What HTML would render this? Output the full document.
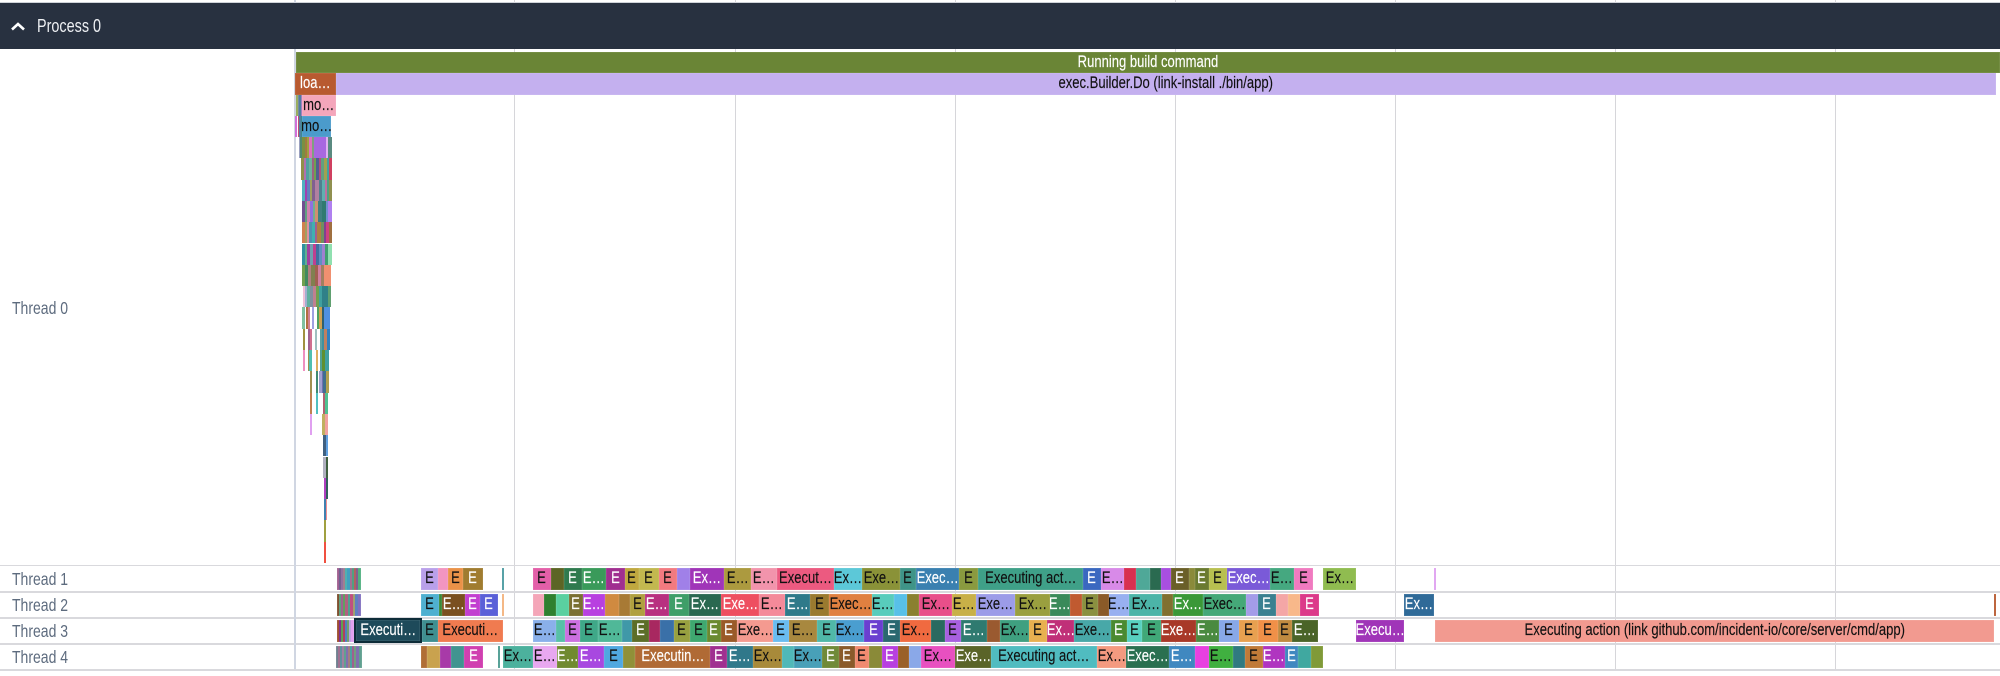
<!DOCTYPE html>
<html><head><meta charset="utf-8"><style>
html,body{margin:0;padding:0;width:2000px;height:676px;overflow:hidden;background:#fff}
body{position:relative;font-family:"Liberation Sans",sans-serif}
#p{position:absolute;left:0;top:0;width:2000px;height:676px;filter:blur(.35px)}
.g{position:absolute;top:0;width:1px;height:669px;background:#d6d6da}
.h{position:absolute;left:0;width:2000px;height:1.5px;background:#d9d9dd}
.l{position:absolute;left:12px;font-size:17.5px;color:#5d6b7e;line-height:22px;transform:scaleX(.8);transform-origin:0 0}
.r{position:absolute;left:0;top:0;width:2000px;height:22px}
.r i{position:absolute;top:0;height:100%;display:flex;justify-content:center;font-style:normal;font-size:16.5px;line-height:21px;color:#111;overflow:hidden;white-space:nowrap;box-shadow:inset 0 0 0 .5px rgba(255,255,255,.15);-webkit-text-stroke:.15px}
.r i.w{color:#fff}
b{font-weight:normal;display:block;flex:none;transform:scaleX(.79)}
.f{position:absolute;height:21.3px}
</style></head><body><div id="p">
<div style="position:absolute;left:0;top:2px;width:2000px;height:1px;background:#cfd3d9"></div>
<div class="g" style="left:514px"></div><div class="g" style="left:735px"></div><div class="g" style="left:955px"></div><div class="g" style="left:1175px"></div><div class="g" style="left:1395px"></div><div class="g" style="left:1615px"></div><div class="g" style="left:1835px"></div>
<div class="h" style="top:564.5px"></div><div class="h" style="top:591px"></div><div class="h" style="top:617px"></div><div class="h" style="top:643px"></div><div class="h" style="top:669px"></div>
<div style="position:absolute;left:294px;top:0;width:2px;height:669px;background:#d0d6e2"></div>
<div style="position:absolute;left:0;top:3px;width:2000px;height:46px;background:#283140"></div>
<svg style="position:absolute;left:0;top:0" width="30" height="50"><path d="M12 29.5 L18 24 L24 29.5" fill="none" stroke="#fff" stroke-width="2.6"/></svg>
<div class="l" style="left:37px;top:15px;font-size:18px;color:#eef0f3">Process 0</div>
<div class="l" style="top:297px">Thread 0</div><div class="l" style="top:568px">Thread 1</div><div class="l" style="top:594px">Thread 2</div><div class="l" style="top:620px">Thread 3</div><div class="l" style="top:646px">Thread 4</div>

<div class="r" style="top:52px;height:21.3px"><i class="w" style="left:296px;width:1704px;background:#6a8536"><b>Running build command</b></i></div>
<div class="r" style="top:73.3px;height:21.3px"><i class="w" style="left:295px;width:41px;background:#b85a30"><b>loa…</b></i><i style="left:336px;width:1660px;background:#c4b0ef"><b>exec.Builder.Do (link-install ./bin/app)</b></i></div>
<div class="r" style="top:94.6px;height:21.3px"><i style="left:302px;width:34px;background:#f4a6bb"><b>mo…</b></i></div>
<div class="r" style="top:115.8px;height:21.3px"><i style="left:302px;width:29px;background:#4b9bcb"><b>mo…</b></i></div>
<div class="f" style="left:296px;top:94.6px;width:6px;background:linear-gradient(90deg,#9aae60 0 2px,#7a8aa0 0 3px,#4f7fa0 0 5px,#a080c0 0 6px)"></div>
<div class="f" style="left:295px;top:115.8px;width:7px;background:linear-gradient(90deg,#d070d8 0 2px,#fff 0 3px,#c04f70 0 4px,#5080a0 0 6px,#408890 0 7px)"></div>
<div class="f" style="left:299px;top:137px;width:33px;background:linear-gradient(90deg,#9aa0c0 0 1px,#4f8a70 0 3px,#7a9040 0 6px,#a07a40 0 8px,#a0a040 0 10px,#e070c0 0 13px,#80a080 0 15px,#a868e0 0 27px,#e0b0f0 0 29px,#5a8a80 0 33px)"></div>
<div class="f" style="left:301px;top:158.3px;width:31px;background:linear-gradient(90deg,#90904a 0 3px,#b070b0 0 5px,#50a0a0 0 8px,#70b0a0 0 11px,#a06080 0 13px,#70a050 0 15px,#506090 0 18px,#b05080 0 20px,#60a080 0 23px,#a0a050 0 26px,#40a0a0 0 28px,#d04060 0 31px)"></div>
<div class="f" style="left:302px;top:179.6px;width:30px;background:linear-gradient(90deg,#50b0c0 0 3px,#a040b0 0 5px,#6080c0 0 8px,#a0a060 0 10px,#806090 0 13px,#b080a0 0 17px,#508090 0 20px,#60b0b0 0 23px,#c070a0 0 25px,#50a080 0 27px,#909050 0 30px)"></div>
<div class="f" style="left:302px;top:200.9px;width:30px;background:linear-gradient(90deg,#705090 0 3px,#60a080 0 5px,#d080b0 0 8px,#9070e0 0 11px,#70b090 0 13px,#d09070 0 16px,#408080 0 20px,#307a70 0 24px,#7090d0 0 26px,#b080f0 0 30px)"></div>
<div class="f" style="left:302px;top:222.2px;width:30px;background:linear-gradient(90deg,#d08050 0 3px,#a0a060 0 5px,#e090a0 0 7px,#5090b0 0 10px,#40b0b0 0 13px,#a06090 0 15px,#b08040 0 19px,#709060 0 22px,#804090 0 24px,#d04080 0 27px,#a07040 0 30px)"></div>
<div class="f" style="left:302px;top:243.5px;width:30px;background:linear-gradient(90deg,#3090a0 0 3px,#60b090 0 5px,#a040a0 0 8px,#70a0b0 0 11px,#c04090 0 14px,#4070a0 0 17px,#6090c0 0 20px,#a080d0 0 23px,#40a070 0 26px,#90e0b0 0 30px)"></div>
<div class="f" style="left:302px;top:264.8px;width:29px;background:linear-gradient(90deg,#70a050 0 3px,#408a60 0 6px,#b08080 0 9px,#808050 0 13px,#a06050 0 16px,#d080a0 0 19px,#a08060 0 22px,#f09070 0 29px)"></div>
<div class="f" style="left:303px;top:286.1px;width:28px;background:linear-gradient(90deg,#f0c0d8 0 2px,#a0b0d0 0 4px,#60b0a0 0 7px,#8090a0 0 10px,#c08090 0 13px,#70a050 0 16px,#40a0a0 0 19px,#308088 0 25px,#60a070 0 28px)"></div>
<div class="f" style="left:302px;top:307.4px;width:28px;background:linear-gradient(90deg,#80c0a0 0 3px,#fff 0 4px,#b07040 0 6px,#d08090 0 8px,#fff 0 10px,#a0a0e0 0 12px,#fff 0 15px,#50a060 0 17px,#d0a050 0 20px,#306070 0 22px,#5090e0 0 28px)"></div>
<div class="f" style="left:303px;top:328.7px;width:27px;background:linear-gradient(90deg,#a09040 0 2px,#fff 0 5px,#a06090 0 7px,#d07090 0 9px,#fff 0 12px,#a0c0c0 0 14px,#fff 0 17px,#60a0a0 0 19px,#4090a0 0 21px,#c08060 0 24px,#3080c0 0 26px)"></div>
<div class="f" style="left:303px;top:350px;width:26px;background:linear-gradient(90deg,#f090c0 0 2px,#fff 0 5px,#a09050 0 6px,#50c0b0 0 9px,#fff 0 13px,#e0b060 0 15px,#fff 0 17px,#50a090 0 19px,#609030 0 22px,#40a0a0 0 26px)"></div>
<div class="f" style="left:310px;top:371.3px;width:19px;background:linear-gradient(90deg,#a09050 0 2px,#fff 0 6px,#408a70 0 8px,#fff 0 9px,#a0a0d0 0 12px,#7070b0 0 13px,#407090 0 16px,#b0a050 0 19px)"></div>
<div class="f" style="left:310px;top:392.6px;width:18px;background:linear-gradient(90deg,#c08050 0 2px,#fff 0 6px,#50c0c0 0 8px,#fff 0 13px,#b06070 0 15px,#50c090 0 18px)"></div>
<div class="f" style="left:310px;top:413.9px;width:18px;background:linear-gradient(90deg,#e0a0f0 0 2px,#fff 0 12px,#c0b060 0 15px,#f0a0a0 0 18px)"></div>
<div class="f" style="left:323px;top:435.2px;width:5px;background:linear-gradient(90deg,#406080 0 3px,#60a0e0 0 5px)"></div>
<div class="f" style="left:323px;top:456.5px;width:5px;background:linear-gradient(90deg,#b0b0c0 0 3px,#406040 0 5px)"></div>
<div class="f" style="left:324px;top:477.8px;width:4px;background:linear-gradient(90deg,#b040c0 0 2px,#30605a 0 4px)"></div>
<div class="f" style="left:324px;top:499.1px;width:3px;background:linear-gradient(90deg,#4080b0 0 2px,#f09090 0 3px)"></div>
<div class="f" style="left:324px;top:520.4px;width:2px;background:#a0a040"></div>
<div class="f" style="left:324px;top:541.7px;width:1.5px;background:#f05040"></div>

<div class="r" style="top:568px">
<i style="left:337px;width:24px;background:linear-gradient(90deg,#a06090 0 2px,#706090 0 4px,#9070a0 0 6px,#a08090 0 8px,#50b0b0 0 10px,#40a0c0 0 13px,#a07090 0 15px,#50a080 0 17px,#b06060 0 19px,#806090 0 21px,#50b080 0 24px)"></i>
<i style="left:421px;width:17px;background:#b9a0ea"><b>E</b></i><i style="left:438px;width:10px;background:#f295c0"></i><i style="left:448px;width:15px;background:#ea9248"><b>E</b></i><i class="w" style="left:463px;width:20px;background:#a07c30"><b>E</b></i><i style="left:502px;width:2px;background:#4a9aa0"></i>
<i style="left:533px;width:18px;background:#e35fa8"><b>E</b></i><i style="left:551px;width:13px;background:#5c6525"></i><i class="w" style="left:564px;width:18px;background:#2f7a4e"><b>E</b></i><i class="w" style="left:582px;width:24px;background:#3a9a5a"><b>E…</b></i><i class="w" style="left:606px;width:19px;background:#a02f90"><b>E</b></i><i style="left:625px;width:14px;background:#c0a83f"><b>E</b></i><i style="left:639px;width:20px;background:#c2b84f"><b>E</b></i><i style="left:659px;width:18px;background:#f27a80"><b>E</b></i><i style="left:677px;width:13px;background:#a080e8"></i><i class="w" style="left:690px;width:34px;background:#a035b8"><b>Ex…</b></i><i style="left:724px;width:27px;background:#ac9a3f"><b>E…</b></i><i style="left:751px;width:26px;background:#f294ac"><b>E…</b></i><i style="left:777px;width:57px;background:#ec5a80"><b>Execut…</b></i><i style="left:834px;width:28px;background:#5cc8d8"><b>Ex…</b></i><i style="left:862px;width:38px;background:#8a9238"><b>Exe…</b></i><i style="left:900px;width:16px;background:#3f9488"><b>E</b></i><i class="w" style="left:916px;width:43px;background:#3a80b0"><b>Exec…</b></i><i style="left:959px;width:19px;background:#8a9a3f"><b>E</b></i><i style="left:978px;width:105px;background:#3fa088"><b>Executing act…</b></i><i class="w" style="left:1083px;width:18px;background:#3a68c0"><b>E</b></i><i style="left:1101px;width:23px;background:#d88ae8"><b>E…</b></i><i style="left:1124px;width:12px;background:#d83050"></i><i style="left:1136px;width:14px;background:#4fa898"></i><i style="left:1150px;width:11px;background:#2a6a50"></i><i style="left:1161px;width:10px;background:#a84fe0"></i><i class="w" style="left:1171px;width:18px;background:#6a5f28"><b>E</b></i><i style="left:1189px;width:6px;background:#8a8a3a"></i><i class="w" style="left:1195px;width:14px;background:#6a7a30"><b>E</b></i><i style="left:1209px;width:18px;background:#b8c050"><b>E</b></i><i class="w" style="left:1227px;width:43px;background:#7a5ad8"><b>Exec…</b></i><i style="left:1270px;width:24px;background:#45a880"><b>E…</b></i><i style="left:1294px;width:19px;background:#f07ac0"><b>E</b></i><i style="left:1323px;width:33px;background:#90bc50"><b>Ex…</b></i><i style="left:1434px;width:1.5px;background:#dfa0f0"></i>
</div>

<div class="r" style="top:594px">
<i style="left:337px;width:24px;background:linear-gradient(90deg,#805030 0 2px,#60a080 0 4px,#a06090 0 6px,#60a060 0 8px,#b06080 0 11px,#50a090 0 13px,#c05080 0 16px,#a0a070 0 18px,#6080c0 0 21px,#8070c0 0 24px)"></i>
<i style="left:421px;width:18px;background:#4fb0d0"><b>E</b></i><i style="left:439px;width:3px;background:#3a8a3a"></i><i class="w" style="left:442px;width:23px;background:#7a5020"><b>E…</b></i><i class="w" style="left:465px;width:15px;background:#c23fd0"><b>E</b></i><i class="w" style="left:480px;width:18px;background:#5a60d8"><b>E</b></i><i style="left:502px;width:2px;background:#f4b27c"></i>
<i style="left:533px;width:11px;background:#f4a6b8"></i><i style="left:544px;width:12px;background:#2f802f"></i><i style="left:556px;width:13px;background:#5ad0a0"></i><i class="w" style="left:569px;width:14px;background:#7a7032"><b>E</b></i><i class="w" style="left:583px;width:22px;background:#b840e0"><b>E…</b></i><i style="left:605px;width:14px;background:#d08a40"></i><i style="left:619px;width:11px;background:#a87a35"></i><i style="left:630px;width:15px;background:#b0a040"><b>E</b></i><i class="w" style="left:645px;width:24px;background:#b83080"><b>E…</b></i><i class="w" style="left:669px;width:20px;background:#3f9e68"><b>E</b></i><i class="w" style="left:689px;width:32px;background:#2a6850"><b>Ex…</b></i><i class="w" style="left:721px;width:38px;background:#ee4f60"><b>Exe…</b></i><i style="left:759px;width:26px;background:#f48a9a"><b>E…</b></i><i class="w" style="left:785px;width:25px;background:#2f7a8a"><b>E…</b></i><i style="left:810px;width:19px;background:#9a7a2f"><b>E</b></i><i style="left:829px;width:43px;background:#e08040"><b>Exec…</b></i><i style="left:872px;width:22px;background:#58ccbc"><b>E…</b></i><i style="left:894px;width:13px;background:#58c0e8"></i><i style="left:907px;width:12px;background:#8a8030"></i><i style="left:919px;width:33px;background:#e84f8a"><b>Ex…</b></i><i style="left:952px;width:24px;background:#c8b048"><b>E…</b></i><i style="left:976px;width:39px;background:#9c9ce8"><b>Exe…</b></i><i style="left:1015px;width:35px;background:#9a9f3f"><b>Ex…</b></i><i class="w" style="left:1050px;width:20px;background:#3a8a5a"><b>E…</b></i><i style="left:1070px;width:12px;background:#c05a30"></i><i style="left:1082px;width:16px;background:#8a9040"><b>E</b></i><i style="left:1098px;width:11px;background:#8a5a28"></i><i style="left:1109px;width:20px;background:#98b0f0"><b>E…</b></i><i style="left:1129px;width:33px;background:#4cb4a8"><b>Ex…</b></i><i style="left:1162px;width:11px;background:#807030"></i><i class="w" style="left:1173px;width:30px;background:#3a9838"><b>Ex…</b></i><i style="left:1203px;width:43px;background:#45a878"><b>Exec…</b></i><i style="left:1246px;width:12px;background:#a49ce8"></i><i class="w" style="left:1258px;width:18px;background:#3a8090"><b>E</b></i><i style="left:1276px;width:12px;background:#f4a6a6"></i><i style="left:1288px;width:12px;background:#f8b88a"></i><i class="w" style="left:1300px;width:19px;background:#dc3a8a"><b>E</b></i><i class="w" style="left:1404px;width:30px;background:#2f6a98"><b>Ex…</b></i><i style="left:1994px;width:1.5px;background:#b85a30"></i>
</div>

<div class="r" style="top:620px">
<i style="left:337px;width:17px;background:linear-gradient(90deg,#a05030 0 2px,#803090 0 4px,#60a050 0 6px,#b04060 0 8px,#5080c0 0 10px,#70a070 0 12px,#c0a0e0 0 14px,#e0a0f0 0 17px)"></i>
<i style="left:422px;width:16px;background:#3f8f90"><b>E</b></i><i style="left:438px;width:65px;background:#f07b50"><b>Executi…</b></i>
<i style="left:533px;width:23px;background:#8ab0ea"><b>E…</b></i><i style="left:556px;width:9px;background:#58c0a8"></i><i style="left:565px;width:15px;background:#cc70e0"><b>E</b></i><i style="left:580px;width:18px;background:#3fa888"><b>E</b></i><i style="left:598px;width:24px;background:#50b898"><b>E…</b></i><i style="left:622px;width:10px;background:#4098a8"></i><i class="w" style="left:632px;width:17px;background:#5c6e28"><b>E</b></i><i style="left:649px;width:11px;background:#a82860"></i><i style="left:660px;width:14px;background:#3a70a8"></i><i style="left:674px;width:16px;background:#98a040"><b>E</b></i><i style="left:690px;width:17px;background:#3fa870"><b>E</b></i><i class="w" style="left:707px;width:14px;background:#6a8a30"><b>E</b></i><i class="w" style="left:721px;width:16px;background:#9a5a28"><b>E</b></i><i style="left:737px;width:36px;background:#f49a90"><b>Exe…</b></i><i style="left:773px;width:16px;background:#6abcf0"><b>E</b></i><i style="left:789px;width:28px;background:#a8883f"><b>E…</b></i><i style="left:817px;width:19px;background:#50b8a8"><b>E</b></i><i style="left:836px;width:28px;background:#4a9ed0"><b>Ex…</b></i><i class="w" style="left:864px;width:19px;background:#6a3fd0"><b>E</b></i><i class="w" style="left:883px;width:17px;background:#2a6870"><b>E</b></i><i style="left:900px;width:31px;background:#f06a40"><b>Ex…</b></i><i style="left:931px;width:14px;background:#2a6a60"></i><i style="left:945px;width:16px;background:#a860e0"><b>E</b></i><i class="w" style="left:961px;width:26px;background:#2f7a70"><b>E…</b></i><i style="left:987px;width:13px;background:#9a5a30"></i><i style="left:1000px;width:29px;background:#3fa080"><b>Ex…</b></i><i style="left:1029px;width:18px;background:#e8b050"><b>E</b></i><i class="w" style="left:1047px;width:27px;background:#c03078"><b>Ex…</b></i><i style="left:1074px;width:37px;background:#48a8a8"><b>Exe…</b></i><i class="w" style="left:1111px;width:16px;background:#4a8a30"><b>E</b></i><i style="left:1127px;width:15px;background:#58d0c0"><b>E</b></i><i style="left:1142px;width:19px;background:#40a878"><b>E</b></i><i class="w" style="left:1161px;width:35px;background:#a83828"><b>Exe…</b></i><i class="w" style="left:1196px;width:23px;background:#4a8a40"><b>E…</b></i><i style="left:1219px;width:20px;background:#88a8e8"><b>E</b></i><i style="left:1239px;width:19px;background:#e8a050"><b>E</b></i><i style="left:1258px;width:20px;background:#f09048"><b>E</b></i><i style="left:1278px;width:14px;background:#c08a40"><b>E</b></i><i class="w" style="left:1292px;width:26px;background:#4a6428"><b>E…</b></i><i class="w" style="left:1356px;width:48px;background:#a035b8"><b>Execu…</b></i><i style="left:1435px;width:559px;background:#f29a90"><b>Executing action (link github.com/incident-io/core/server/cmd/app)</b></i>
</div>
<div class="r" style="left:354px;top:618px;width:68px;height:25px"><i class="w" style="left:0;width:68px;box-sizing:border-box;border:2.5px solid #0d2c38;background:#1e4a5a;line-height:20px"><b>Executi…</b></i></div>

<div class="r" style="top:646px">
<i style="left:336px;width:26px;background:linear-gradient(90deg,#708090 0 2px,#a07090 0 4px,#6090a0 0 6px,#a080a0 0 8px,#60a090 0 10px,#8070b0 0 12px,#a08080 0 14px,#50a0a0 0 16px,#a06090 0 18px,#70a080 0 20px,#8070b0 0 23px,#60a090 0 26px)"></i>
<i style="left:421px;width:6px;background:#b06e35"></i><i style="left:427px;width:13px;background:#c9a24e"></i><i style="left:440px;width:11px;background:#a83aa8"></i><i style="left:451px;width:13px;background:#419490"></i><i class="w" style="left:464px;width:19px;background:#d03fb0"><b>E</b></i><i style="left:498px;width:2px;background:#4a9a90"></i><i style="left:503px;width:30px;background:#4cb19d"><b>Ex…</b></i>
<i style="left:533px;width:24px;background:#e8a8f0"><b>E…</b></i><i class="w" style="left:557px;width:21px;background:#708a30"><b>E…</b></i><i class="w" style="left:578px;width:26px;background:#a848e0"><b>E…</b></i><i style="left:604px;width:19px;background:#50a8e0"><b>E</b></i><i style="left:623px;width:12px;background:#909038"></i><i class="w" style="left:635px;width:75px;background:#b06a35"><b>Executin…</b></i><i class="w" style="left:710px;width:17px;background:#a03090"><b>E</b></i><i class="w" style="left:727px;width:26px;background:#30788a"><b>E…</b></i><i style="left:753px;width:29px;background:#a88a3a"><b>Ex…</b></i><i style="left:782px;width:12px;background:#50b8b8"></i><i style="left:794px;width:28px;background:#48a0b8"><b>Ex…</b></i><i class="w" style="left:822px;width:17px;background:#708a38"><b>E</b></i><i class="w" style="left:839px;width:16px;background:#8a5a2a"><b>E</b></i><i style="left:855px;width:14px;background:#f08a70"><b>E</b></i><i style="left:869px;width:13px;background:#8a8a38"></i><i class="w" style="left:882px;width:16px;background:#b840e0"><b>E</b></i><i style="left:898px;width:11px;background:#9a6028"></i><i style="left:909px;width:12px;background:#8aa8e8"></i><i style="left:921px;width:34px;background:#e850c0"><b>Ex…</b></i><i class="w" style="left:955px;width:36px;background:#5a6428"><b>Exe…</b></i><i style="left:991px;width:106px;background:#50bcc0"><b>Executing act…</b></i><i style="left:1097px;width:29px;background:#f49a80"><b>Ex…</b></i><i class="w" style="left:1126px;width:43px;background:#2a7050"><b>Exec…</b></i><i class="w" style="left:1169px;width:26px;background:#4088c0"><b>E…</b></i><i style="left:1195px;width:14px;background:#e840e0"></i><i style="left:1209px;width:24px;background:#40b040"><b>E…</b></i><i style="left:1233px;width:12px;background:#307a80"></i><i style="left:1245px;width:18px;background:#c07a38"><b>E</b></i><i class="w" style="left:1263px;width:22px;background:#b035c0"><b>E…</b></i><i class="w" style="left:1285px;width:13px;background:#4088c0"><b>E</b></i><i style="left:1298px;width:13px;background:#40a8a0"></i><i style="left:1311px;width:12px;background:#809a38"></i>
</div>
</div></body></html>
